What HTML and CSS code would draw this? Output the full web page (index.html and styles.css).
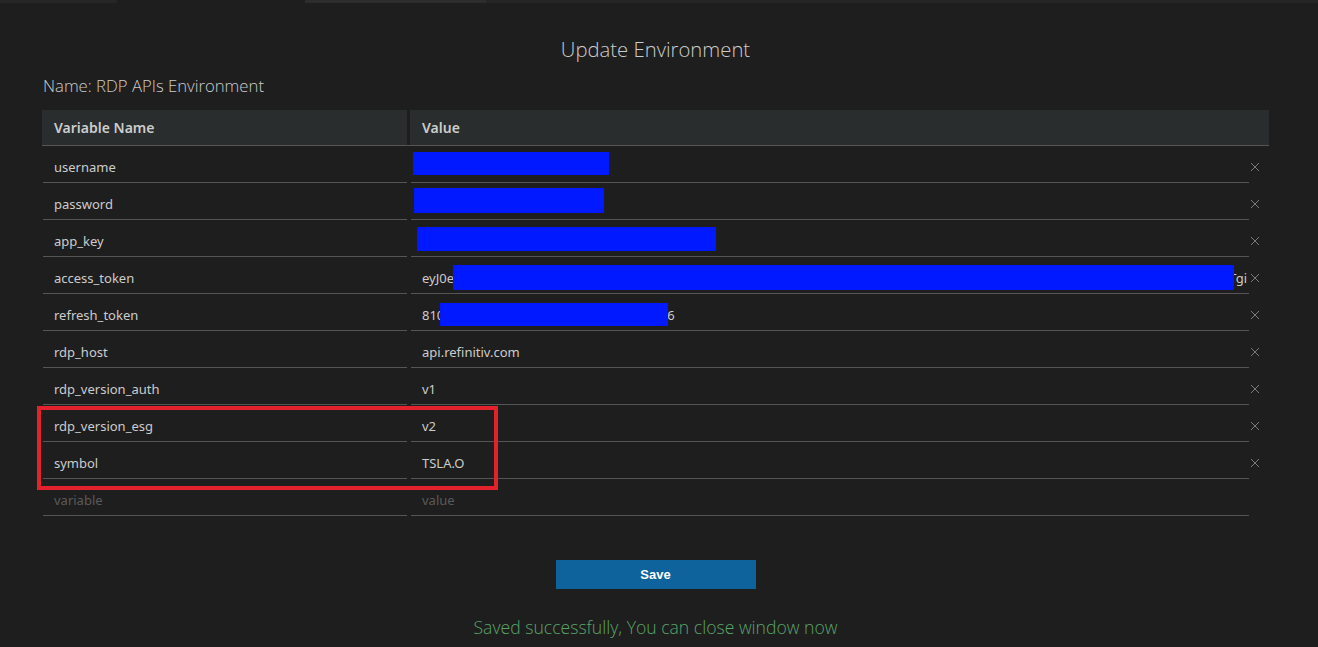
FILE: index.html
```html
<!DOCTYPE html>
<html>
<head>
<meta charset="utf-8">
<link rel="stylesheet" href="styles.css">
</head>
<body>
<div class="tabs">
  <span class="tab t1"></span>
  <span class="tab t2"></span>
  <span class="tab t3"></span>
  <span class="tab t4"></span>
</div>
<main class="page">
  <h1 class="title">Update Environment</h1>
  <div class="env-name">Name: RDP APIs Environment</div>
  <div class="table">
    <div class="thead">
      <div class="th th-name">Variable Name</div>
      <div class="th th-value">Value</div>
    </div>
    <div class="row">
      <div class="cell name">username</div>
      <div class="cell value"><span class="redact" style="left:2px;top:6px;width:196px;height:23px"></span></div>
      <div class="del"><svg viewBox="0 0 10 10" width="10" height="10"><path d="M1 1L9 9M9 1L1 9"/></svg></div>
    </div>
    <div class="row">
      <div class="cell name">password</div>
      <div class="cell value"><span class="redact" style="left:3px;top:5px;width:190px;height:25px"></span></div>
      <div class="del"><svg viewBox="0 0 10 10" width="10" height="10"><path d="M1 1L9 9M9 1L1 9"/></svg></div>
    </div>
    <div class="row">
      <div class="cell name">app_key</div>
      <div class="cell value"><span class="redact" style="left:6px;top:7px;width:299px;height:24px"></span></div>
      <div class="del"><svg viewBox="0 0 10 10" width="10" height="10"><path d="M1 1L9 9M9 1L1 9"/></svg></div>
    </div>
    <div class="row">
      <div class="cell name">access_token</div>
      <div class="cell value split"><span>eyJ0e</span><span class="tail">Tgi</span><span class="redact" style="left:42px;top:8px;width:781px;height:25px"></span></div>
      <div class="del"><svg viewBox="0 0 10 10" width="10" height="10"><path d="M1 1L9 9M9 1L1 9"/></svg></div>
    </div>
    <div class="row">
      <div class="cell name">refresh_token</div>
      <div class="cell value">810<span class="spacer"></span>6<span class="redact" style="left:29px;top:9px;width:228px;height:23px"></span></div>
      <div class="del"><svg viewBox="0 0 10 10" width="10" height="10"><path d="M1 1L9 9M9 1L1 9"/></svg></div>
    </div>
    <div class="row">
      <div class="cell name">rdp_host</div>
      <div class="cell value">api.refinitiv.com</div>
      <div class="del"><svg viewBox="0 0 10 10" width="10" height="10"><path d="M1 1L9 9M9 1L1 9"/></svg></div>
    </div>
    <div class="row">
      <div class="cell name">rdp_version_auth</div>
      <div class="cell value">v1</div>
      <div class="del"><svg viewBox="0 0 10 10" width="10" height="10"><path d="M1 1L9 9M9 1L1 9"/></svg></div>
    </div>
    <div class="row">
      <div class="cell name">rdp_version_esg</div>
      <div class="cell value">v2</div>
      <div class="del"><svg viewBox="0 0 10 10" width="10" height="10"><path d="M1 1L9 9M9 1L1 9"/></svg></div>
    </div>
    <div class="row">
      <div class="cell name">symbol</div>
      <div class="cell value">TSLA.O</div>
      <div class="del"><svg viewBox="0 0 10 10" width="10" height="10"><path d="M1 1L9 9M9 1L1 9"/></svg></div>
    </div>
    <div class="row">
      <div class="cell name placeholder">variable</div>
      <div class="cell value placeholder">value</div>
      <div class="del"></div>
    </div>
    <div class="highlight"></div>
  </div>
  <div class="actions">
    <button class="save">Save</button>
  </div>
  <div class="status">Saved successfully, You can close window now</div>
</main>
</body>
</html>
```

FILE: styles.css
```css
html, body {
  margin: 0;
  padding: 0;
  background: #1e1e1e;
  color: #cccccc;
  font-family: "Noto Sans", "Open Sans", sans-serif;
}

.tabs {
  display: flex;
  height: 3px;
}
.tab { display: block; height: 3px; }
.t1 { width: 117px; background: #262626; }
.t2 { width: 188px; background: #1e1e1e; }
.t3 { width: 181px; background: #2d2d2d; }
.t4 { flex: 1; background: #252526; }

.page {
  padding: 0 49px 0 42px;
}

.title {
  margin: 0;
  padding-top: 32px;
  text-align: center;
  font-family: "Open Sans", "Noto Sans", sans-serif;
  font-weight: 300;
  font-size: 20.3px;
  line-height: 28px;
  color: #cccccc;
}

.env-name {
  margin-top: 12px;
  font-family: "Open Sans", "Noto Sans", sans-serif;
  font-weight: 300;
  font-size: 16.7px;
  line-height: 22px;
  padding-left: 1px;
  color: #cccccc;
}

.table {
  position: relative;
  margin-top: 13px;
}

.thead {
  display: flex;
  gap: 3px;
  height: 35px;
  border-bottom: 1px solid #555555;
}
.th {
  background: #2a2d2e;
  font-size: 14px;
  font-weight: 600;
  line-height: 36px;
  color: #cccccc;
  box-sizing: border-box;
  padding-left: 12px;
}
.th-name { width: 365px; }
.th-value { flex: 1; }

.row {
  display: flex;
  height: 37px;
  padding-left: 1px;
}
.cell {
  position: relative;
  box-sizing: border-box;
  height: 37px;
  border-bottom: 1px solid #555555;
  font-size: 13px;
  padding-top: 6px;
  line-height: 30px;
  color: #cccccc;
  white-space: nowrap;
}
.name {
  width: 364px;
  padding-left: 11px;
  margin-right: 4px;
}
.value {
  width: 838px;
  padding-left: 11px;
}
.split {
  display: flex;
  justify-content: space-between;
  padding-right: 2px;
}
.tail { display: block; }
.spacer {
  display: inline-block;
  width: 223px;
}
.placeholder { color: #5a5a5a; }

.del {
  width: 20px;
  height: 37px;
  display: flex;
  align-items: center;
  justify-content: flex-start;
  padding-top: 5px;
  padding-left: 1px;
  box-sizing: border-box;
}
.del svg {
  stroke: #7a7a7a;
  stroke-width: 1;
  fill: none;
}

.redact {
  position: absolute;
  display: block;
  background: #0019ff;
}

.highlight {
  position: absolute;
  left: -5px;
  top: 296px;
  width: 453px;
  height: 76px;
  border: 4px solid #e3222b;
}

.actions {
  display: flex;
  justify-content: center;
  margin-top: 44px;
}
.save {
  width: 200px;
  height: 29px;
  border: none;
  background: #0e639c;
  color: #ffffff;
  font-family: "Liberation Sans", Arial, sans-serif;
  font-weight: bold;
  font-size: 13px;
  padding: 0;
}

.status {
  margin-top: 26px;
  text-align: center;
  font-family: "Open Sans", "Noto Sans", sans-serif;
  font-weight: 300;
  font-size: 17.6px;
  line-height: 24px;
  color: #5aa469;
}
```
